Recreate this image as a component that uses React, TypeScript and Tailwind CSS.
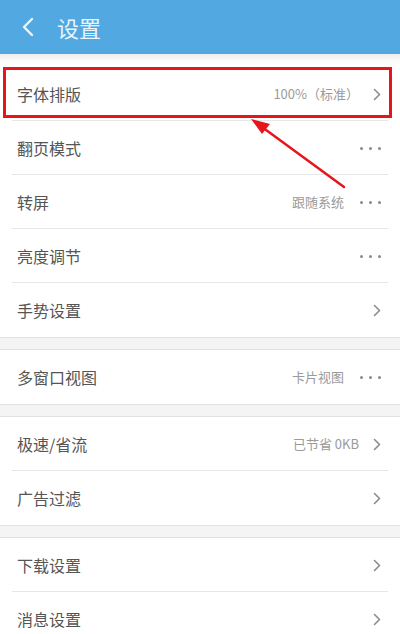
import React from 'react';

type Row = { label: string; value?: string; action: 'chevron' | 'dots' };

const SECTIONS: Row[][] = [
  [
    { label: '字体排版', value: '100%（标准）', action: 'chevron' },
    { label: '翻页模式', action: 'dots' },
    { label: '转屏', value: '跟随系统', action: 'dots' },
    { label: '亮度调节', action: 'dots' },
    { label: '手势设置', action: 'chevron' },
  ],
  [{ label: '多窗口视图', value: '卡片视图', action: 'dots' }],
  [
    { label: '极速/省流', value: '已节省 0KB', action: 'chevron' },
    { label: '广告过滤', action: 'chevron' },
  ],
  [
    { label: '下载设置', action: 'chevron' },
    { label: '消息设置', action: 'chevron' },
  ],
];

function Chevron() {
  return (
    <svg width="8" height="13" viewBox="0 0 8 13" fill="none" className="shrink-0">
      <path d="M1.5 1.5 L6.5 6.5 L1.5 11.5" stroke="#8c8c8c" strokeWidth="1.6" strokeLinecap="round" strokeLinejoin="round" />
    </svg>
  );
}

function Dots() {
  return (
    <div className="flex items-center gap-[6px] shrink-0">
      <span className="w-[3px] h-[3px] rounded-full bg-[#8a8a8a]" />
      <span className="w-[3px] h-[3px] rounded-full bg-[#8a8a8a]" />
      <span className="w-[3px] h-[3px] rounded-full bg-[#8a8a8a]" />
    </div>
  );
}

function SettingRow({ row, last, highlight }: { row: Row; last: boolean; highlight?: boolean }) {
  return (
    <div className="relative h-[54px] bg-white">
      <div className="h-full flex items-center pl-[17px] pr-[19px]">
        <span className="text-[16px] text-[#555555]">{row.label}</span>
        <div className="ml-auto flex items-center">
          {row.value && (
            <span className={`text-[13px] text-[#9a9a9a] ${row.action === 'chevron' ? 'mr-[14px]' : 'mr-[16px]'}`}>
              {row.value}
            </span>
          )}
          {row.action === 'chevron' ? <Chevron /> : <Dots />}
        </div>
      </div>
      {!last && <div className="absolute left-[12px] right-[12px] bottom-0 h-px bg-[#e6e6e6]" />}
      {highlight && (
        <div className="absolute left-[3px] right-[8px] top-0 bottom-[3px] border-[3px] border-[#e8141b]" />
      )}
    </div>
  );
}

function Band({ light }: { light?: boolean }) {
  return light ? (
    <div className="h-[13px] bg-gradient-to-b from-[#ececec] via-[#fafafa] to-white" />
  ) : (
    <div className="h-[13px] bg-[#f4f4f4] border-t border-b border-[#e1e1e1]" />
  );
}

export default function App() {
  return (
    <div
      className="relative w-[400px] h-[634px] overflow-hidden bg-white"
      style={{ fontFamily: '"Noto Sans CJK SC", "Noto Sans", Roboto, sans-serif' }}
    >
      {/* Header */}
      <header className="h-[54px] bg-[#52a8e0] flex items-center">
        <svg width="14" height="20" viewBox="0 0 14 20" fill="none" className="ml-[21px]">
          <path d="M11 2 L3 10 L11 18" stroke="#eef6fc" strokeWidth="2.4" strokeLinecap="round" strokeLinejoin="round" />
        </svg>
        <h1 className="ml-[22px] text-[22px] text-[#eaf4fb]">设置</h1>
      </header>

      <Band light />

      {SECTIONS.map((section, si) => (
        <div key={si}>
          {si > 0 && <Band />}
          {section.map((row, ri) => (
            <SettingRow
              key={row.label}
              row={row}
              last={ri === section.length - 1}
              highlight={si === 0 && ri === 0}
            />
          ))}
        </div>
      ))}

      {/* Annotation arrow */}
      <svg className="absolute left-0 top-0 pointer-events-none" width="400" height="634">
        <line x1="344" y1="187" x2="262" y2="127" stroke="#e8141b" strokeWidth="2.5" strokeLinecap="round" />
        <polygon points="251,119 270,124 262,134" fill="#e8141b" />
      </svg>
    </div>
  );
}
